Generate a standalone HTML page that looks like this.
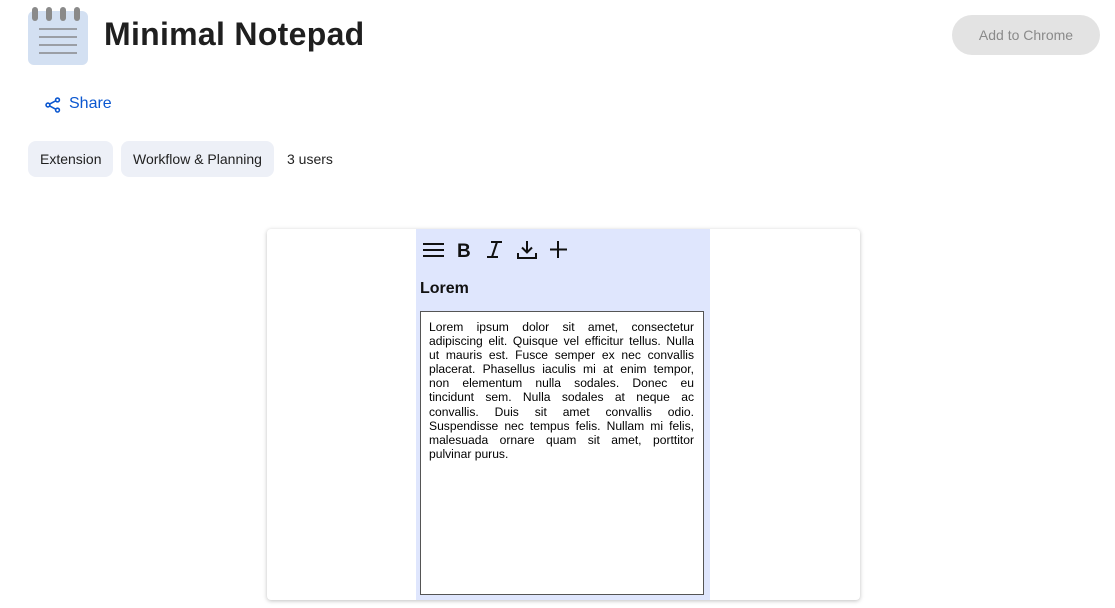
<!DOCTYPE html>
<html><head><style>
*{margin:0;padding:0;box-sizing:border-box}
body{width:1115px;height:608px;background:#fff;font-family:"Liberation Sans",sans-serif;position:relative;overflow:hidden;color:#1f1f1f}
.abs{position:absolute}
.chip{position:absolute;top:141px;height:36px;background:#edf0f7;border-radius:8px;font-size:14px;line-height:36px;padding:0 12px;color:#1f1f1f}
.line{display:block;text-align:justify;text-align-last:justify;height:14.1px;white-space:nowrap}
.txt span{display:block;height:14.1px}
</style></head><body>
<svg class="abs" style="left:28px;top:6px" width="60" height="60" viewBox="0 0 60 60">
<rect x="0" y="5" width="60" height="54" rx="6" fill="#d3e0f2"/>
<g fill="#8a8a8a"><rect x="4" y="1" width="6" height="14" rx="3"/><rect x="18" y="1" width="6" height="14" rx="3"/><rect x="32" y="1" width="6" height="14" rx="3"/><rect x="46" y="1" width="6" height="14" rx="3"/></g>
<g stroke="#777" stroke-width="1.2"><line x1="11" y1="23" x2="49" y2="23"/><line x1="11" y1="31" x2="49" y2="31"/><line x1="11" y1="39" x2="49" y2="39"/><line x1="11" y1="47" x2="49" y2="47"/></g>
</svg>
<div class="abs" style="left:104px;top:16px;font-size:32px;font-weight:bold;color:#1f1f1f;letter-spacing:0.3px">Minimal Notepad</div>
<div class="abs" style="left:952px;top:15px;width:148px;height:40px;border-radius:20px;background:#e3e3e3;color:#8a8a8a;font-size:14px;line-height:40px;text-align:center">Add to Chrome</div>
<svg class="abs" style="left:44px;top:96px" width="18" height="18" viewBox="0 0 16 16" fill="none" stroke="#0b57d0" stroke-width="1.4"><circle cx="12" cy="3.5" r="1.7"/><circle cx="3.5" cy="8" r="1.7"/><circle cx="12" cy="12.5" r="1.7"/><path d="M5 7.2L10.4 4.3M5 8.8L10.4 11.7"/></svg>
<div class="abs" style="left:69px;top:95px;font-size:16px;color:#0b57d0">Share</div>
<div class="chip" style="left:28px">Extension</div>
<div class="chip" style="left:121px">Workflow &amp; Planning</div>
<div class="abs" style="left:287px;top:151px;font-size:14px">3 users</div>
<div class="abs" style="left:267px;top:229px;width:593px;height:371px;background:#fff;border-radius:4px;box-shadow:0 1px 4px rgba(0,0,0,.25)"></div>
<div class="abs" style="left:416px;top:229px;width:294px;height:371px;background:#dfe6fd"></div>
<svg class="abs" style="left:420px;top:237px" width="150" height="26" viewBox="0 0 150 26" fill="none" stroke="#111" stroke-width="2">
<path d="M3 7H24M3 13H24M3 19H24"/>
<text x="37" y="20" font-family="Liberation Sans" font-weight="bold" font-size="19" fill="#111" stroke="none">B</text>
<path d="M71 5H82M67 20H78M77 5L72 20" stroke-width="2"/>
<path d="M107 4V15M102 10.5L107 15.5L112 10.5M98 16V21H116V16"/>
<path d="M138 4V21M130 12.5H147"/>
</svg>
<div class="abs" style="left:420px;top:280px;font-size:16px;font-weight:bold;color:#111">Lorem</div>
<div class="abs" style="left:420px;top:311px;width:284px;height:284px;background:#fff;border:1.5px solid #555"></div>
<div class="abs txt" style="left:429px;top:320px;width:265px;font-size:12.1px;color:#000">
<span class="line">Lorem ipsum dolor sit amet, consectetur</span>
<span class="line">adipiscing elit. Quisque vel efficitur tellus. Nulla</span>
<span class="line">ut mauris est. Fusce semper ex nec convallis</span>
<span class="line">placerat. Phasellus iaculis mi at enim tempor,</span>
<span class="line">non elementum nulla sodales. Donec eu</span>
<span class="line">tincidunt sem. Nulla sodales at neque ac</span>
<span class="line">convallis. Duis sit amet convallis odio.</span>
<span class="line">Suspendisse nec tempus felis. Nullam mi felis,</span>
<span class="line">malesuada ornare quam sit amet, porttitor</span>
<span>pulvinar purus.</span>
</div>
</body></html>
